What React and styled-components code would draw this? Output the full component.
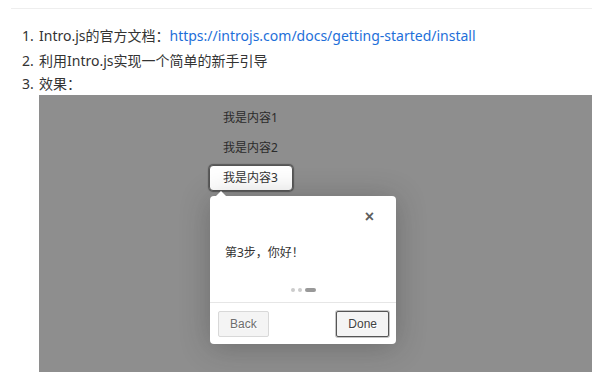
import React from "react";
import styled, { createGlobalStyle } from "styled-components";

const GlobalStyle = createGlobalStyle`
  body {
    margin: 0;
    background: #fff;
    font-family: "Noto Sans", "Noto Sans CJK SC", sans-serif;
    color: #333;
  }
`;

const steps = [
  { id: 1, text: "我是内容1" },
  { id: 2, text: "我是内容2" },
  { id: 3, text: "我是内容3", active: true },
];

const App = () => {
  return (
    <>
      <GlobalStyle />
      <Page>
        <List>
          <Item>
            <Num>1.</Num>
            <span>
              Intro.js的官方文档：
              <Link href="#">https://introjs.com/docs/getting-started/install</Link>
            </span>
          </Item>
          <Item>
            <Num>2.</Num>
            <span>利用Intro.js实现一个简单的新手引导</span>
          </Item>
          <Item compact>
            <Num>3.</Num>
            <span>效果：</span>
            <Demo>
              <Steps>
                {steps.map((s) => (
                  <Step key={s.id} active={s.active}>
                    {s.text}
                  </Step>
                ))}
                <Tooltip>
                  <TipHeader>
                    <Close>×</Close>
                  </TipHeader>
                  <TipBody>第3步，你好！</TipBody>
                  <Bullets>
                    <Dot />
                    <Dot />
                    <Dot active />
                  </Bullets>
                  <TipFooter>
                    <Btn muted>Back</Btn>
                    <Btn focused>Done</Btn>
                  </TipFooter>
                </Tooltip>
              </Steps>
            </Demo>
          </Item>
        </List>
      </Page>
    </>
  );
};

export default App;

const Page = styled.div`
  margin: 8px 13px 0 11px;
  border-top: 1px solid #eeeeee;
`;

const List = styled.ol`
  list-style: none;
  margin: 0;
  padding: 14px 0 0 0;
`;

const Item = styled.li`
  display: grid;
  grid-template-columns: 28px 1fr;
  font-size: 14px;
  line-height: ${(p) => (p.compact ? "22px" : "25px")};
`;

const Num = styled.span`
  padding-left: 11px;
`;

const Link = styled.a`
  color: #1e6fd9;
  text-decoration: none;
`;

const Demo = styled.div`
  grid-column: 2;
  height: 277px;
  background: #8e8e8e;
`;

const Steps = styled.div`
  display: flex;
  flex-direction: column;
  align-items: flex-start;
  gap: 4px;
  padding: 10px 0 0 170px;
`;

const Step = styled.div`
  height: 24px;
  line-height: 24px;
  padding: 0 14px 0 13px;
  font-size: 12px;
  color: ${(p) => (p.active ? "#333" : "#2b2b2b")};
  background: ${(p) => (p.active ? "#fff" : "transparent")};
  border: 1px solid ${(p) => (p.active ? "#555" : "transparent")};
  border-radius: 4px;
  box-shadow: ${(p) => (p.active ? "0 0 1px 1px rgba(33,33,33,0.5)" : "none")};
`;

const Tooltip = styled.div`
  position: relative;
  margin: 1px 0 0 1px;
  width: 186px;
  background: #fff;
  border-radius: 4px;
  box-shadow: 0 3px 30px rgba(33, 33, 33, 0.3);

  &::before {
    content: "";
    position: absolute;
    top: -10px;
    left: 6px;
    border: 5px solid transparent;
    border-bottom-color: #fff;
  }
`;

const TipHeader = styled.div`
  height: 42px;
  display: flex;
  justify-content: flex-end;
  align-items: center;
  padding-right: 22px;
`;

const Close = styled.span`
  font-family: "Liberation Sans", Arial, sans-serif;
  font-size: 16px;
  font-weight: 700;
  color: #5e5e5e;
  line-height: 1;
`;

const TipBody = styled.div`
  padding: 4px 15px;
  line-height: 22px;
  font-size: 12px;
  color: #333;
`;

const Bullets = styled.div`
  display: flex;
  justify-content: center;
  align-items: center;
  gap: 3px;
  padding: 20px 0 10px;
  border-bottom: 1px solid #e6e6e6;
`;

const Dot = styled.span`
  width: ${(p) => (p.active ? "11px" : "4px")};
  height: 4px;
  border-radius: 3px;
  background: ${(p) => (p.active ? "#999" : "#ccc")};
`;

const TipFooter = styled.div`
  display: flex;
  justify-content: space-between;
  padding: 8px 7px 7px 8px;
`;

const Btn = styled.button`
  height: 26px;
  padding: 0 11px;
  font-family: "Liberation Sans", Arial, sans-serif;
  font-size: 12px;
  color: ${(p) => (p.muted ? "#6e6e6e" : "#424242")};
  background: #f4f4f4;
  border: 1px solid ${(p) => (p.focused ? "#555" : "#d8d8d8")};
  border-radius: 2px;
  box-shadow: ${(p) => (p.focused ? "0 0 0 1px rgba(158,158,158,0.6)" : "none")};
  text-shadow: 1px 1px 0 #fff;
  cursor: pointer;
`;
